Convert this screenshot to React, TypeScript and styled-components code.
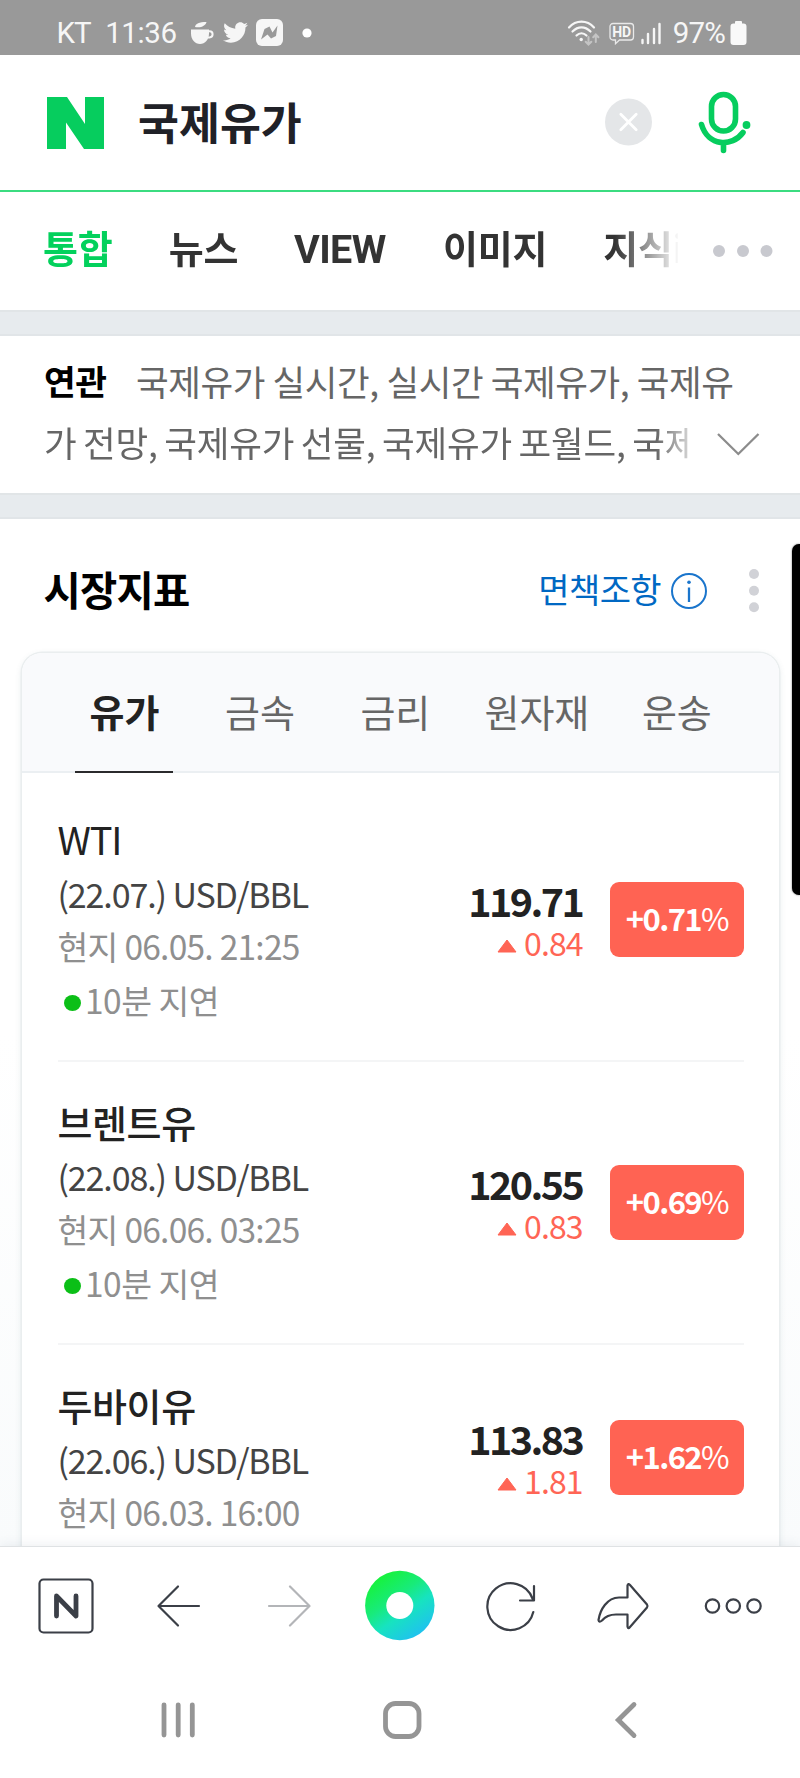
import React from "react";
import styled, { createGlobalStyle, css } from "styled-components";
import { FaTwitter } from "react-icons/fa";

const GlobalStyle = createGlobalStyle`
  * { box-sizing: border-box; }
  body { margin: 0; background: #fff; font-family: "Noto Sans CJK KR", "Noto Sans", sans-serif; }
`;

const Screen = styled.div`
  position: relative;
  display: flex;
  flex-direction: column;
  width: 800px;
  height: 1778px;
  overflow: hidden;
  background: #fdfefe;
`;

/* ---------- status bar ---------- */
const StatusBar = styled.div`
  display: flex;
  align-items: center;
  justify-content: space-between;
  height: 55px;
  padding: 10px 53px 0 56.5px;
  background: #999;
  color: #f6f6f6;
  font: 400 29.5px/40px Roboto, sans-serif;
`;
const StatusGroup = styled.div`
  display: flex;
  align-items: center;
  svg { display: block; }
`;
const Carrier = styled.span`
  margin-right: 14.5px;
  letter-spacing: -1px;
`;
const Clock = styled.span`
  margin-right: 13.5px;
  letter-spacing: -0.4px;
`;
const Percent = styled.span`
  margin: 0 5px 0 10px;
  letter-spacing: -0.8px;
`;
const Bird = styled(FaTwitter)`
  width: 25px;
  height: 25px;
  margin: 0 8px 0 9px;
`;

/* ---------- search header ---------- */
const SearchHeader = styled.header`
  display: flex;
  align-items: center;
  height: 137px;
  padding: 0 49px 2px 47px;
  background: #fff;
  border-bottom: 2px solid #3bdc80;
  svg { display: block; }
`;
const Logo = styled.svg`
  margin-top: 3px;
`;
const Query = styled.div`
  flex: 1;
  margin: -2px 0 0 33px;
  color: #202127;
  font-size: 44.5px;
  font-weight: 700;
  line-height: 60px;
`;
const ClearButton = styled.div`
  margin-right: 46px;
`;

/* ---------- search tabs ---------- */
const TabBar = styled.nav`
  display: flex;
  align-items: center;
  height: 118px;
  padding-left: 43px;
  background: #fff;
`;
const TabList = styled.div`
  display: flex;
  gap: 56.2px;
  width: 635px;
  margin-top: -6px;
  overflow: hidden;
  mask-image: linear-gradient(to right, #000 572px, transparent 637px);
`;
const SearchTab = styled.div<{ $active?: boolean; $latin?: boolean }>`
  flex: none;
  color: ${(p) => (p.$active ? "#03d15c" : "#333")};
  font-size: 38px;
  font-weight: 700;
  line-height: 56px;
  letter-spacing: -0.2px;
  ${(p) => p.$latin && css`
    margin: 0 1px 0 -0.5px;
    font-family: Roboto, sans-serif;
    font-size: 39.5px;
    letter-spacing: -0.6px;
    padding-top: 3px;
  `}
`;
const MoreDots = styled.svg`
  display: block;
  margin-left: 32px;
`;

const Gutter = styled.div`
  height: 26px;
  background: #e7ebee;
  border-top: 2px solid #e1e5e7;
  border-bottom: 2px solid #e1e5e8;
`;

/* ---------- related queries ---------- */
const Related = styled.section`
  height: 157px;
  padding: 14px 0 0 44px;
  background: #fff;
  color: #666;
  font-size: 35.5px;
  line-height: 61px;
  letter-spacing: -0.4px;
  white-space: nowrap;
`;
const RelatedLine = styled.div`
  display: flex;
  align-items: center;
  height: 61px;
`;
const RelatedLabel = styled.strong`
  width: 92px;
  color: #000;
  font-size: 34.5px;
`;
const FadedText = styled.div`
  width: 644px;
  overflow: hidden;
  letter-spacing: -0.13px;
  word-spacing: -1.4px;
  mask-image: linear-gradient(to right, #000 612px, transparent 658px);
`;
const Chevron = styled.svg`
  display: block;
  margin: 4px 0 0 28px;
`;

/* ---------- market widget ---------- */
const Market = styled.section`
  flex: 1;
  min-height: 0;
  overflow: hidden;
  background: linear-gradient(#fff 50%, #f9fbfc);
`;
const MarketHead = styled.div`
  display: flex;
  align-items: center;
  height: 134px;
  padding: 9px 40px 0 43.5px;
  svg { display: block; }
`;
const MarketTitle = styled.h2`
  flex: 1;
  margin: -3px 0 0;
  color: #000;
  font-size: 40.5px;
  font-weight: 700;
  line-height: 60px;
  letter-spacing: -0.8px;
`;
const Disclaimer = styled.span`
  margin: -3px 10px 0 0;
  color: #0068c3;
  font-size: 34px;
  line-height: 50px;
  letter-spacing: -0.6px;
`;
const InfoMark = styled.svg`
  margin-right: 41px;
`;
const Card = styled.div`
  height: 1000px;
  margin: 0 21px 0 22px;
  overflow: hidden;
  background: #fff;
  border-radius: 20px 20px 0 0;
  box-shadow: 0 0 0 1.5px #eaeeef, 0 2px 7px rgba(60, 90, 100, 0.14);
`;
const CardTabs = styled.div`
  display: grid;
  grid-template-columns: 135.4px 135.4px 135.4px 147.8px 132px;
  height: 120px;
  padding-left: 34.8px;
  background: #f9fafc;
  border-bottom: 2px solid #ebeff2;
`;
const CardTab = styled.div<{ $active?: boolean }>`
  display: flex;
  justify-content: center;
  width: ${(p) => (p.$active ? "98px" : "auto")};
  height: 120px;
  justify-self: ${(p) => (p.$active ? "center" : "stretch")};
  padding-top: 30px;
  color: ${(p) => (p.$active ? "#222" : "#666")};
  font-size: 38px;
  font-weight: ${(p) => (p.$active ? 700 : 400)};
  line-height: 56px;
  letter-spacing: -0.1px;
  white-space: nowrap;
  border-bottom: ${(p) => (p.$active ? "2px solid #2a2a2c" : "0")};
`;
const Rows = styled.div`
  padding: 6px 35.4px 0 35.5px;
`;
const Row = styled.article`
  display: flex;
  align-items: center;
  padding: 32px 0;
  border-bottom: 2px solid #f4f5f6;
`;
const Info = styled.div`
  flex: 1;
  white-space: nowrap;
`;
const Name = styled.div<{ $latin?: boolean }>`
  height: 56px;
  color: #222;
  font-size: 38px;
  font-weight: ${(p) => (p.$latin ? 400 : 500)};
  line-height: 56px;
  letter-spacing: ${(p) => (p.$latin ? "-1.2px" : "-0.4px")};
`;
const Contract = styled.div`
  height: 53px;
  color: #444;
  font-size: 34px;
  line-height: 54px;
  letter-spacing: -1.12px;
`;
const LocalTime = styled.div`
  height: 51px;
  color: #8f8f8f;
  font-size: 33.5px;
  line-height: 51px;
  letter-spacing: -0.75px;
`;
const Delay = styled.div`
  display: flex;
  align-items: center;
  height: 57px;
  color: #8f8f8f;
  font-size: 33.5px;
  line-height: 57px;
  letter-spacing: -0.5px;
`;
const LiveDot = styled.i`
  width: 17px;
  height: 16px;
  margin: 6px 4.5px 0 6px;
  border-radius: 50%;
  background: #0bbf17;
`;
const Quote = styled.div`
  padding-top: 2px;
  margin-right: 27px;
  text-align: right;
`;
const Price = styled.div`
  margin-right: 0.5px;
  color: #222;
  font-size: 39.5px;
  font-weight: 700;
  line-height: 44px;
  letter-spacing: -2.6px;
`;
const Change = styled.div`
  display: flex;
  align-items: center;
  justify-content: flex-end;
  gap: 7px;
  color: #ff6555;
  font-size: 32px;
  line-height: 41px;
  letter-spacing: -0.9px;
`;
const UpArrow = styled.svg`
  display: block;
  margin-top: 7px;
`;
const Badge = styled.div`
  width: 134px;
  height: 75px;
  padding: 1px 0 0 1px;
  border-radius: 9px;
  background: #ff6353;
  color: #fff;
  font-size: 31px;
  font-weight: 400;
  line-height: 70px;
  letter-spacing: -1.2px;
  text-align: center;
  b { font-weight: 700; letter-spacing: -1.6px; }
`;

const EdgeHandle = styled.div`
  position: absolute;
  top: 544px;
  right: 0;
  width: 8px;
  height: 351px;
  border-radius: 7px 0 0 7px;
  background: #000;
  box-shadow: 0 0 2px rgba(0, 0, 0, 0.6);
`;

/* ---------- bottom bars ---------- */
const Toolbar = styled.footer`
  position: relative;
  display: flex;
  align-items: center;
  height: 119px;
  padding: 0 11.5px 0 10.5px;
  background: #fff;
  border-top: 1px solid #dfe2e4;
  box-shadow: 0 -2px 10px rgba(80, 100, 120, 0.09);
`;
const ToolButton = styled.div`
  flex: 1;
  display: flex;
  justify-content: center;
  svg { display: block; fill: none; stroke: #3b3f47; stroke-width: 2.2; stroke-linecap: round; stroke-linejoin: round; }
`;
const SystemNav = styled.div`
  position: relative;
  display: flex;
  align-items: center;
  height: 113px;
  padding: 0 62.5px 3px 66.5px;
  background: #fff;
`;
const NavButton = styled.div`
  flex: 1;
  display: flex;
  justify-content: center;
  svg { display: block; fill: none; stroke: #959595; stroke-width: 4.8; stroke-linecap: round; }
`;

type Oil = { name: string; latin?: boolean; contract: string; time: string; delay?: string; price: string; change: string; rate: string };
const oils: Oil[] = [
  { name: "WTI", latin: true, contract: "(22.07.) USD/BBL", time: "현지 06.05. 21:25", delay: "10분 지연", price: "119.71", change: "0.84", rate: "+0.71" },
  { name: "브렌트유", contract: "(22.08.) USD/BBL", time: "현지 06.06. 03:25", delay: "10분 지연", price: "120.55", change: "0.83", rate: "+0.69" },
  { name: "두바이유", contract: "(22.06.) USD/BBL", time: "현지 06.03. 16:00", price: "113.83", change: "1.81", rate: "+1.62" },
];

const OilRow = ({ oil }: { oil: Oil }) => (
  <Row>
    <Info>
      <Name $latin={oil.latin}>{oil.name}</Name>
      <Contract>{oil.contract}</Contract>
      <LocalTime>{oil.time}</LocalTime>
      {oil.delay && <Delay><LiveDot />{oil.delay}</Delay>}
    </Info>
    <Quote>
      <Price>{oil.price}</Price>
      <Change>
        <UpArrow width="20" height="14" viewBox="0 0 20 14"><path d="M10 1 19 13H1Z" fill="#ff6555" stroke="#ff6555" strokeLinejoin="round" /></UpArrow>
        {oil.change}
      </Change>
    </Quote>
    <Badge><b>{oil.rate}</b>%</Badge>
  </Row>
);

const CupIcon = () => (
  <svg width="24" height="24" viewBox="0 0 24 24" fill="#f6f6f6">
    <path d="M1 8.500h18v4c0 6-4 10.500-9 10.500s-9-4.500-9-10.500Z" />
    <path d="M18 10.200h1.500a2.800 2.800 0 0 1 0 6.200h-2" fill="none" stroke="#f6f6f6" strokeWidth="2" />
    <path d="M5 6C5.500 2.500 9 1 16.500 1 15.500 5 11 7 5 6Z" />
  </svg>
);
const NoteIcon = () => (
  <svg width="27" height="27" viewBox="0 0 27 27">
    <rect width="27" height="27" rx="6" fill="#f6f6f6" />
    <path d="M5 20.500 8.500 10 13.500 7.500 16.500 13.500 21.500 6.500 20 17 15 19.500 11.500 15.500Z" fill="#999" />
  </svg>
);
const WifiIcon = () => (
  <svg width="33" height="26" viewBox="0 0 33 26" fill="none" stroke="#f6f6f6" strokeWidth="2.200" strokeLinecap="round">
    <path d="M2 7.500C9-.3 20-.3 27 7.500M5.500 11.500C11 6 18 6 23.500 11.500M9.500 15.500C12.500 12.500 16.500 12.500 19.500 15.500" />
    <circle cx="14.200" cy="19.500" r="1.700" fill="#f6f6f6" stroke="none" />
    <path d="M21.500 17v7.500m-2.800-2.800 2.800 2.800 2.800-2.800M28.800 22v-7.500m-2.600 2.800 2.600-2.800 2.600 2.800" stroke="#c4c4c4" strokeWidth="2" />
  </svg>
);
const HdText = styled.text`
  font: 700 14px Roboto, sans-serif;
  fill: #f6f6f6;
`;
const HdIcon = () => (
  <svg width="26" height="24" viewBox="0 0 26 24" fill="none" stroke="#e9e9e9" strokeWidth="1.300">
    <path d="M4 2.500h17.500a3 3 0 0 1 3 3v10.500a3 3 0 0 1-3 3H10.500l-4 3.700V19H4a3 3 0 0 1-3-3V5.500a3 3 0 0 1 3-3Z" />
    <HdText x="3.300" y="16" stroke="none" textLength="18.800">HD</HdText>
  </svg>
);

export default function App() {
  return (
    <Screen>
      <GlobalStyle />
      <StatusBar>
        <StatusGroup>
          <Carrier>KT</Carrier>
          <Clock>11:36</Clock>
          <CupIcon />
          <Bird />
          <NoteIcon />
          <svg width="30" height="10" viewBox="0 0 30 10"><circle cx="24" cy="5" r="4.600" fill="#fff" /></svg>
        </StatusGroup>
        <StatusGroup>
          <WifiIcon />
          <svg width="9" height="1" />
          <HdIcon />
          <svg width="28" height="24" viewBox="0 0 28 24" stroke="#f6f6f6" strokeWidth="2.400" strokeLinecap="round">
            <path d="M7.500 19v3M13 13v9M19 8v14M24.500 3v19" />
          </svg>
          <Percent>97%</Percent>
          <svg width="17" height="24" viewBox="0 0 17 24" fill="#f9f9f9"><path d="M5 2.500V1a1 1 0 0 1 1-1h5a1 1 0 0 1 1 1v1.500h1.500a3 3 0 0 1 3 3V21a3 3 0 0 1-3 3h-10a3 3 0 0 1-3-3V5.500a3 3 0 0 1 3-3Z" /></svg>
        </StatusGroup>
      </StatusBar>

      <SearchHeader>
        <Logo width="58" height="52" viewBox="0 0 58 52"><path d="M0 0H20L38 27V0H57V52H37L19 25.500V52H0Z" fill="#06cd5e" /></Logo>
        <Query>국제유가</Query>
        <ClearButton>
          <svg width="48" height="48" viewBox="0 0 48 48"><circle cx="24.500" cy="24" r="23.500" fill="#e4e6e8" /><path d="m16.800 16.300 15.400 15.400m0-15.400-15.400 15.400" stroke="#fff" strokeWidth="2.800" strokeLinecap="round" /></svg>
        </ClearButton>
        <svg width="53" height="64" viewBox="0 0 53 64" fill="none" stroke="#06cd5e" strokeWidth="5.600" strokeLinecap="round">
          <rect x="13.500" y="4.500" width="24" height="36.500" rx="12" />
          <path d="M3.500 34.500C10 56.500 34 57.500 45 42.500M25.500 52.500v8" />
          <circle cx="48.500" cy="35" r="3.900" fill="#06cd5e" stroke="none" />
        </svg>
      </SearchHeader>

      <TabBar>
        <TabList>
          <SearchTab $active>통합</SearchTab>
          <SearchTab>뉴스</SearchTab>
          <SearchTab $latin>VIEW</SearchTab>
          <SearchTab>이미지</SearchTab>
          <SearchTab>지식iN</SearchTab>
        </TabList>
        <MoreDots width="64" height="14" viewBox="0 0 64 14" fill="#c8c9cf"><circle cx="9" cy="7" r="6" /><circle cx="33" cy="7" r="6" /><circle cx="56.500" cy="7" r="6" /></MoreDots>
      </TabBar>
      <Gutter />

      <Related>
        <RelatedLine><RelatedLabel>연관</RelatedLabel>국제유가 실시간, 실시간 국제유가, 국제유</RelatedLine>
        <RelatedLine>
          <FadedText>가 전망, 국제유가 선물, 국제유가 포월드, 국제유가</FadedText>
          <Chevron width="44" height="24" viewBox="0 0 44 24" fill="none" stroke="#8c8c8c" strokeWidth="2.300"><path d="m2 2 20.300 20L42.500 2" /></Chevron>
        </RelatedLine>
      </Related>
      <Gutter />

      <Market>
        <MarketHead>
          <MarketTitle>시장지표</MarketTitle>
          <Disclaimer>면책조항</Disclaimer>
          <InfoMark width="36" height="36" viewBox="0 0 36 36" fill="none" stroke="#1a75cc" strokeWidth="2"><circle cx="18" cy="18" r="17" /><path d="M18 14.500V29" strokeWidth="2.300" /><circle cx="18" cy="9.300" r="1.800" fill="#1a75cc" stroke="none" /></InfoMark>
          <svg width="12" height="46" viewBox="0 0 12 46" fill="#d1d2d7"><circle cx="6" cy="6" r="5" /><circle cx="6" cy="22.700" r="5" /><circle cx="6" cy="39.300" r="5" /></svg>
        </MarketHead>
        <Card>
          <CardTabs>
            <CardTab $active>유가</CardTab>
            <CardTab>금속</CardTab>
            <CardTab>금리</CardTab>
            <CardTab>원자재</CardTab>
            <CardTab>운송</CardTab>
          </CardTabs>
          <Rows>{oils.map((oil) => <OilRow key={oil.name} oil={oil} />)}</Rows>
        </Card>
      </Market>

      <Toolbar>
        <ToolButton><svg width="80" height="80" viewBox="0 0 80 80"><rect x="13.500" y="13.500" width="53" height="53" rx="4" /><path d="M30.500 50V30L50 50V30" strokeWidth="4.800" /></svg></ToolButton>
        <ToolButton><svg width="80" height="80" viewBox="0 0 80 80"><path d="M41 20.500 21.500 40 41 59.500M22 40H62" /></svg></ToolButton>
        <ToolButton><svg width="80" height="80" viewBox="0 0 80 80" opacity="0.38"><path d="M42 20.500 61.500 40 42 59.500M61 40H21" /></svg></ToolButton>
        <ToolButton>
          <svg width="80" height="80" viewBox="0 0 80 80">
            <defs><linearGradient id="ring" x1="0.200" y1="0.100" x2="0.800" y2="0.950"><stop offset="0" stopColor="#17f23d" /><stop offset="0.350" stopColor="#18eb7a" /><stop offset="0.600" stopColor="#17e3c0" /><stop offset="1" stopColor="#20bff3" /></linearGradient></defs>
            <circle cx="40.800" cy="39.500" r="34.700" fill="url(#ring)" stroke="none" /><circle cx="40.800" cy="39.500" r="13.500" fill="#fff" stroke="none" />
          </svg>
        </ToolButton>
        <ToolButton><svg width="80" height="80" viewBox="0 0 80 80"><path d="M62.300 46A23.300 23.300 0 1 1 61.500 32.500M63 20V34.500H49" /></svg></ToolButton>
        <ToolButton><svg width="80" height="80" viewBox="0 0 80 80"><path d="M45.500 31.500V19.500Q46 17 48 19L65 38.500Q66 40 65 41.500L48 61Q46 63.500 45.500 60.500V48.500H34Q25 48.500 20 54.500Q17 57 16.500 54C18 44 25 31.500 37 31.500Z" /></svg></ToolButton>
        <ToolButton><svg width="80" height="80" viewBox="0 0 80 80"><circle cx="19.500" cy="40" r="6.700" /><circle cx="40.300" cy="40" r="6.700" /><circle cx="61" cy="40" r="6.700" /></svg></ToolButton>
      </Toolbar>
      <SystemNav>
        <NavButton><svg width="60" height="60" viewBox="0 0 60 60"><path d="M16 14.800V45M30.200 14.800V45M44.300 14.800V45" /></svg></NavButton>
        <NavButton><svg width="60" height="60" viewBox="0 0 60 60"><rect x="13.500" y="13.500" width="33.500" height="33" rx="10" /></svg></NavButton>
        <NavButton><svg width="60" height="60" viewBox="0 0 60 60"><path d="M38 14.500 22.300 30 38 45.500" strokeLinejoin="miter" /></svg></NavButton>
      </SystemNav>
      <EdgeHandle />
    </Screen>
  );
}
